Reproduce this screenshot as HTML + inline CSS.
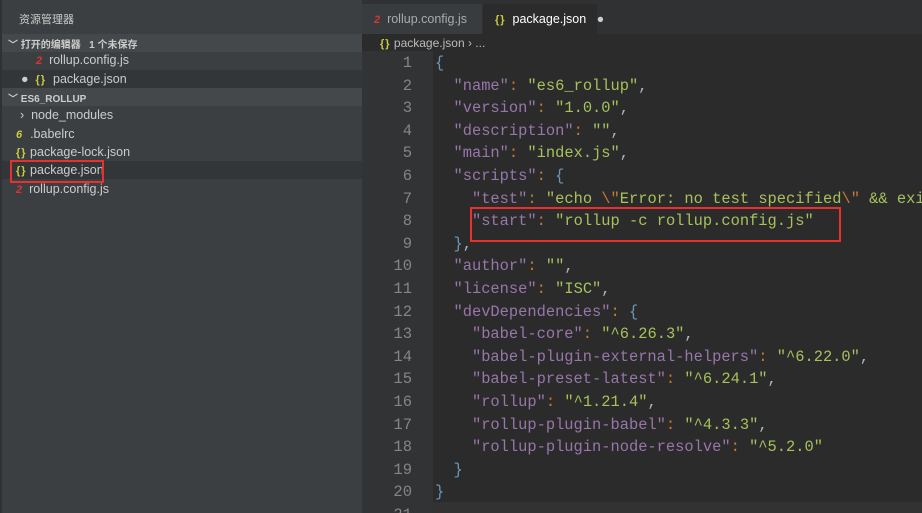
<!DOCTYPE html>
<html><head><meta charset="utf-8"><style>
*{margin:0;padding:0;box-sizing:border-box}
body{width:922px;height:513px;overflow:hidden;background:#2b2b2b;font-family:"Liberation Sans","Noto Sans CJK SC",sans-serif;position:relative}
.sb{position:absolute;left:0;top:0;width:362px;height:513px;background:#3c3f41;border-left:2px solid #2f3133}
.t{position:absolute;color:#ccc;font-size:12.5px;white-space:nowrap}
.hd{position:absolute;left:0;width:360px;height:18px;background:#45484a}
.sel{position:absolute;left:0;width:360px;height:18px;background:#333638}
.ic{color:#cbcb41;font-weight:bold;font-size:11px;letter-spacing:1px}
.js{color:#d33;font-weight:bold;font-size:11px;font-style:italic}
.ed{position:absolute;left:362px;top:0;width:560px;height:513px;overflow:hidden}
.tabs{position:absolute;left:0;top:0;width:560px;height:34px;background:#2f3133}
.code{position:absolute;left:0;top:54px;width:560px;font-family:"Liberation Mono",monospace;font-size:15.4px}
.ln{position:absolute;left:0;width:50px;text-align:right;color:#858585;font-size:15.5px}
.l{position:absolute;left:73px;white-space:pre;color:#a9b7c6}
.k{color:#9876aa}.s{color:#a5c25c}.p{color:#cc7832}.b{color:#6897bb}
</style></head><body>
<div class="sb">
<div class="t" style="left:17px;top:11px;font-size:11px">资源管理器</div>
<div class="hd" style="top:34px"></div>
<div class="t" style="left:6px;top:36px;font-size:10px;font-weight:bold">﹀ 打开的编辑器 &nbsp;&nbsp;1 个未保存</div>
<div class="t" style="left:34px;top:53px"><span class="js">2</span>&nbsp; rollup.config.js</div>
<div class="sel" style="top:70px"></div>
<div class="t" style="left:19px;top:72px">●&nbsp; <span class="ic">{}</span>&nbsp; package.json</div>
<div class="hd" style="top:88px"></div>
<div class="t" style="left:6px;top:90px;font-size:10px;font-weight:bold">﹀ ES6_ROLLUP</div>
<div class="t" style="left:18px;top:108px">›&nbsp; node_modules</div>
<div class="t" style="left:14px;top:127px"><span class="ic" style="font-style:italic">6</span>&nbsp; .babelrc</div>
<div class="t" style="left:14px;top:145px"><span class="ic">{}</span> package-lock.json</div>
<div class="sel" style="top:161px"></div>
<div class="t" style="left:14px;top:163px"><span class="ic">{}</span> package.json</div>
<div style="position:absolute;left:8px;top:160px;width:94px;height:23px;border:2px solid #e8302f"></div>
<div class="t" style="left:14px;top:182px"><span class="js">2</span>&nbsp; rollup.config.js</div>
</div>
<div class="ed">
<div class="tabs"></div>
<div style="position:absolute;left:0;top:4px;width:120px;height:30px;background:#393c3e"></div>
<div class="t" style="left:12px;top:12px;color:#aaa"><span class="js">2</span>&nbsp; rollup.config.js</div>
<div style="position:absolute;left:121px;top:4px;width:114px;height:30px;background:#2b2b2b"></div>
<div class="t" style="left:133px;top:12px;color:#fff"><span class="ic">{}</span>&nbsp; package.json &nbsp;&nbsp;<span style="color:#ccc">●</span></div>
<div style="position:absolute;left:0;top:34px;width:560px;height:17px;background:#2b2b2b"></div>
<div class="t" style="left:18px;top:36px;color:#bbb;font-size:12px"><span class="ic">{}</span> package.json › ...</div>
<div style="position:absolute;left:0;top:51px;width:71px;height:462px;background:#313335"></div>
<div style="position:absolute;left:71px;top:502px;width:489px;height:11px;background:#323232"></div>
<div class="code">
<div class="ln" style="top:0">1</div><div class="l" style="top:0"><span class="b">{</span></div>
<div class="ln" style="top:22.6px">2</div><div class="l" style="top:22.6px">  <span class="k">"name"</span><span class="p">:</span> <span class="s">"es6_rollup"</span>,</div>
<div class="ln" style="top:45.2px">3</div><div class="l" style="top:45.2px">  <span class="k">"version"</span><span class="p">:</span> <span class="s">"1.0.0"</span>,</div>
<div class="ln" style="top:67.8px">4</div><div class="l" style="top:67.8px">  <span class="k">"description"</span><span class="p">:</span> <span class="s">""</span>,</div>
<div class="ln" style="top:90.4px">5</div><div class="l" style="top:90.4px">  <span class="k">"main"</span><span class="p">:</span> <span class="s">"index.js"</span>,</div>
<div class="ln" style="top:113px">6</div><div class="l" style="top:113px">  <span class="k">"scripts"</span><span class="p">:</span> <span class="b">{</span></div>
<div class="ln" style="top:135.6px">7</div><div class="l" style="top:135.6px">    <span class="k">"test"</span><span class="p">:</span> <span class="s">"echo <span class="p">\"</span>Error: no test specified<span class="p">\"</span> &amp;&amp; exit 1"</span>,</div>
<div class="ln" style="top:158.2px">8</div><div class="l" style="top:158.2px">    <span class="k">"start"</span><span class="p">:</span> <span class="s">"rollup -c rollup.config.js"</span></div>
<div class="ln" style="top:180.8px">9</div><div class="l" style="top:180.8px">  <span class="b">}</span>,</div>
<div class="ln" style="top:203.4px">10</div><div class="l" style="top:203.4px">  <span class="k">"author"</span><span class="p">:</span> <span class="s">""</span>,</div>
<div class="ln" style="top:226px">11</div><div class="l" style="top:226px">  <span class="k">"license"</span><span class="p">:</span> <span class="s">"ISC"</span>,</div>
<div class="ln" style="top:248.6px">12</div><div class="l" style="top:248.6px">  <span class="k">"devDependencies"</span><span class="p">:</span> <span class="b">{</span></div>
<div class="ln" style="top:271.2px">13</div><div class="l" style="top:271.2px">    <span class="k">"babel-core"</span><span class="p">:</span> <span class="s">"^6.26.3"</span>,</div>
<div class="ln" style="top:293.8px">14</div><div class="l" style="top:293.8px">    <span class="k">"babel-plugin-external-helpers"</span><span class="p">:</span> <span class="s">"^6.22.0"</span>,</div>
<div class="ln" style="top:316.4px">15</div><div class="l" style="top:316.4px">    <span class="k">"babel-preset-latest"</span><span class="p">:</span> <span class="s">"^6.24.1"</span>,</div>
<div class="ln" style="top:339px">16</div><div class="l" style="top:339px">    <span class="k">"rollup"</span><span class="p">:</span> <span class="s">"^1.21.4"</span>,</div>
<div class="ln" style="top:361.6px">17</div><div class="l" style="top:361.6px">    <span class="k">"rollup-plugin-babel"</span><span class="p">:</span> <span class="s">"^4.3.3"</span>,</div>
<div class="ln" style="top:384.2px">18</div><div class="l" style="top:384.2px">    <span class="k">"rollup-plugin-node-resolve"</span><span class="p">:</span> <span class="s">"^5.2.0"</span></div>
<div class="ln" style="top:406.8px">19</div><div class="l" style="top:406.8px">  <span class="b">}</span></div>
<div class="ln" style="top:429.4px">20</div><div class="l" style="top:429.4px"><span class="b">}</span></div>
<div class="ln" style="top:452px">21</div>
</div>
<div style="position:absolute;left:108px;top:207px;width:371px;height:35px;border:2px solid #e8302f"></div>
</div>
</body></html>
